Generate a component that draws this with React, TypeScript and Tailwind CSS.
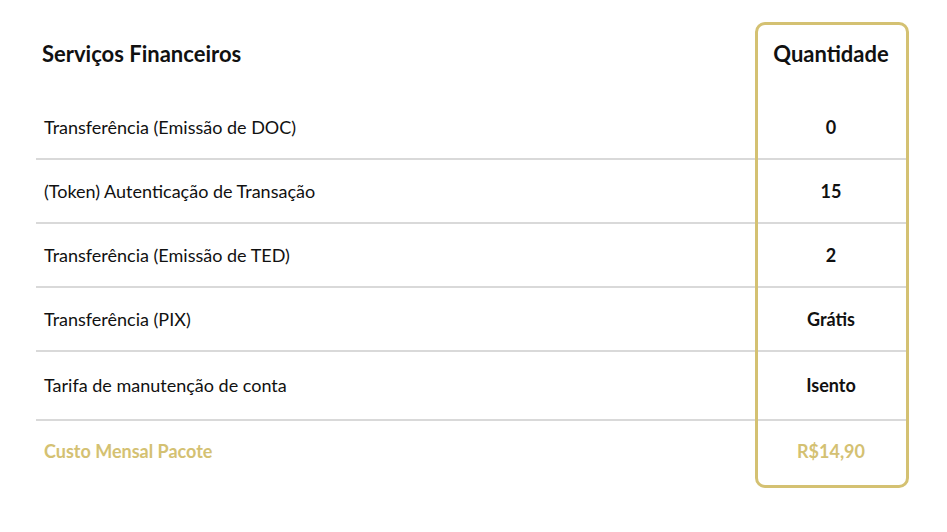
import React from 'react';

const rows = [
  { name: 'Transferência (Emissão de DOC)', qty: '0', h: 'h-[64px]' },
  { name: '(Token) Autenticação de Transação', qty: '15', h: 'h-[64px]' },
  { name: 'Transferência (Emissão de TED)', qty: '2', h: 'h-[64px]' },
  { name: 'Transferência (PIX)', qty: 'Grátis', h: 'h-[64px]' },
  { name: 'Tarifa de manutenção de conta', qty: 'Isento', h: 'h-[69px]' },
];

const App: React.FC = () => {
  return (
    <div
      className="relative w-[947px] h-[532px] bg-white text-[#111]"
      style={{ fontFamily: 'Lato, "Open Sans", sans-serif' }}
    >
      <div className="absolute left-[755px] top-[22px] w-[154px] h-[466px] border-[3px] border-[#d4c172] rounded-[10px] pointer-events-none" />
      <div className="pt-[22px] pl-[36px] w-[907px]">
        <div className="flex h-[74px] pt-[17px]">
          <div className="flex-1 pl-[6px] text-[22px] leading-[30px] font-bold">Serviços Financeiros</div>
          <div className="w-[152px] text-center text-[22px] leading-[30px] font-bold">Quantidade</div>
        </div>
        {rows.map((r) => (
          <div key={r.name} className={`flex items-center border-b-2 border-[#d9d9d9] ${r.h}`}>
            <div className="flex-1 pl-[8px] text-[18px]">{r.name}</div>
            <div className="w-[152px] text-center text-[18px] font-bold">{r.qty}</div>
          </div>
        ))}
        <div className="flex items-center h-[60px] text-[#d4c172] font-bold">
          <div className="flex-1 pl-[8px] text-[18px]">Custo Mensal Pacote</div>
          <div className="w-[152px] text-center text-[18px]">R$14,90</div>
        </div>
      </div>
    </div>
  );
};

export default App;
